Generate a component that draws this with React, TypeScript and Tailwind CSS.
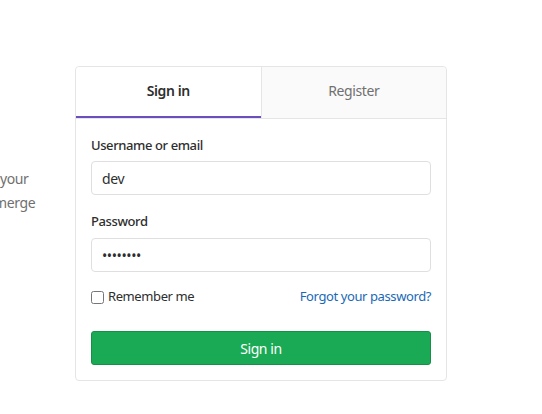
import { useState } from 'react';

export default function App() {
  const [tab, setTab] = useState<'signin' | 'register'>('signin');
  const [user, setUser] = useState('dev');
  const [pass, setPass] = useState('password');
  const [remember, setRemember] = useState(false);

  return (
    <div
      className="min-h-[414px] w-[542px] overflow-hidden bg-white pt-[66px] tracking-[-0.4px]"
      style={{ fontFamily: '"Noto Sans", "Open Sans", sans-serif' }}
    >
      <div className="flex">
        {/* cut-off intro text from the left column */}
        <div className="w-[75px] shrink-0 overflow-hidden pt-[101px] text-[14px] leading-[24px] text-[#707070]">
          <div className="whitespace-nowrap">your</div>
          <div className="-ml-[6px] whitespace-nowrap">merge</div>
        </div>

        <div className="w-[372px] shrink-0 rounded-[4px] border border-[#e5e5e5] bg-white">
          <div className="flex h-[52px] border-b border-[#e5e5e5]">
            <button
              onClick={() => setTab('signin')}
              className={`flex-1 rounded-tl-[4px] text-[14px] ${
                tab === 'signin'
                  ? 'border-b-2 border-[#6b4fbb] bg-white pb-[2px] font-semibold text-[#2e2e2e]'
                  : 'bg-[#fafafa] pb-[4px] text-[#707070]'
              }`}
            >
              Sign in
            </button>
            <button
              onClick={() => setTab('register')}
              className={`flex-1 rounded-tr-[4px] border-l border-[#e5e5e5] text-[14px] ${
                tab === 'register'
                  ? 'border-b-2 border-b-[#6b4fbb] bg-white pb-[2px] font-semibold text-[#2e2e2e]'
                  : 'bg-[#fafafa] pb-[4px] text-[#707070]'
              }`}
            >
              Register
            </button>
          </div>

          <form className="px-[15px] pb-[15px] pt-[16px]" onSubmit={e => e.preventDefault()}>
            <label className="mb-[6px] block text-[13px] font-medium leading-[20px] text-[#2e2e2e]">
              Username or email
            </label>
            <input
              type="text"
              value={user}
              onChange={e => setUser(e.target.value)}
              className="h-[34px] w-full rounded-[4px] border border-[#dfdfdf] px-[10px] text-[14px] text-[#2e2e2e] outline-none focus:border-[#73afea]"
            />

            <label className="mb-[7px] mt-[16px] block text-[13px] font-medium leading-[20px] text-[#2e2e2e]">
              Password
            </label>
            <input
              type="password"
              value={pass}
              onChange={e => setPass(e.target.value)}
              className="h-[34px] w-full rounded-[4px] border border-[#dfdfdf] px-[10px] text-[14px] text-[#2e2e2e] outline-none focus:border-[#73afea]"
            />

            <div className="mt-[16px] flex h-[18px] items-center justify-between text-[13px]">
              <label className="flex items-center text-[#2e2e2e]">
                <input
                  type="checkbox"
                  checked={remember}
                  onChange={e => setRemember(e.target.checked)}
                  className="mr-[4px] h-[13px] w-[13px]"
                />
                Remember me
              </label>
              <a href="#" className="text-[#1b69b6]">
                Forgot your password?
              </a>
            </div>

            <button
              type="submit"
              className="mt-[25px] h-[34px] w-full rounded-[3px] border border-[#168f48] bg-[#1aaa55] text-[14px] text-white"
            >
              Sign in
            </button>
          </form>
        </div>
      </div>
    </div>
  );
}
